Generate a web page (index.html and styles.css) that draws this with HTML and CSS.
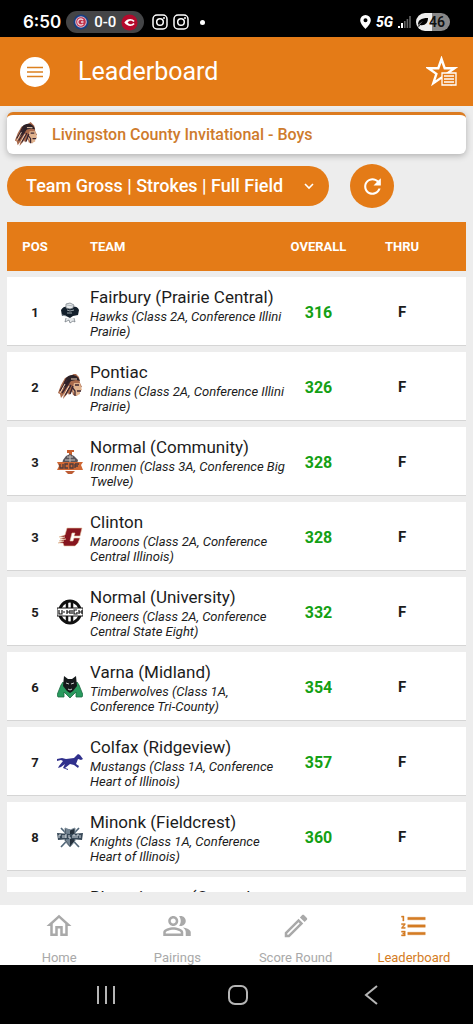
FILE: index.html
```html
<!DOCTYPE html>
<html lang="en">
<head>
<meta charset="utf-8">
<meta name="viewport" content="width=device-width, initial-scale=1">
<title>Leaderboard</title>
<link rel="stylesheet" href="styles.css">
</head>
<body>
<svg class="defs" width="0" height="0" aria-hidden="true">
  <symbol id="chief" viewBox="0 0 26 26">
    <path d="M15 1 8 4 4 11 1 19l2 1 1 4 3-4-1 5 5-6 1 2 3-4 1 4 4 1 1-4 3-1-1-3 2-1-2-4-1-6-4-4z" fill="#a96a4c"/>
    <path d="M9 4c4-5 12-4 14 3l-4-1-5 1-4 5-5 3 2-7z" fill="#2b2026"/>
    <path d="M17 9l6 0 1 4 1 3-2 1v3l-4 2-4-6z" fill="#e0b28e"/>
    <path d="M12 9l-7 10M14 11l-6 10M10 6 3 17M16 12l-3 8" stroke="#3b2630" stroke-width="1.5" fill="none"/>
    <path d="M12 12l-5 9M8 10l-5 9M14 5l6 0" stroke="#f5d7bb" stroke-width="1" fill="none"/>
    <path d="M18 11h4M20 17h4M15 13l3 4 0 5" stroke="#3b2630" stroke-width="1.3" fill="none"/>
  </symbol>
  <symbol id="instagram" viewBox="0 0 16 16">
    <g fill="none" stroke="#fff" stroke-width="1.5"><rect x="1" y="1" width="14" height="14" rx="4"/><circle cx="8" cy="8" r="3.3"/></g>
    <circle cx="12" cy="4" r="1" fill="#fff"/>
  </symbol>
</svg>

<div class="status">
  <span class="clock">6:50</span>
  <span class="score">
    <svg width="16" height="16" viewBox="0 0 16 16"><circle cx="8" cy="8" r="7.5" fill="#173e83"/><circle cx="8" cy="8" r="5.8" fill="#d8bfd0"/><circle cx="8" cy="8" r="4.8" fill="#c0304a"/><path d="M10.2 6.2A3 3 0 1 0 10.2 9.8M8 8h2.5" fill="none" stroke="#f0d8e0" stroke-width="1.3"/></svg>
    <span>0-0</span>
    <svg width="17" height="17" viewBox="0 0 18 18"><circle cx="9" cy="9" r="8.5" fill="#b50a2c"/><path d="M14.5 7.5C12 4.500 6.500 4.500 3.500 9c3 4.500 8.500 4.500 11 1.500l-1.500-1C11.500 11.500 8.500 11.300 7 9c1.500-2.300 4.500-2.500 6-.5z" fill="#fff"/></svg>
  </span>
  <svg width="16" height="16"><use href="#instagram"/></svg>
  <svg width="16" height="16"><use href="#instagram"/></svg>
  <span class="dot"></span>
  <span class="system">
    <svg width="11" height="14" viewBox="0 0 11 14"><path fill="#fff" fill-rule="evenodd" d="M5.500 0A5.300 5.300 0 0 0 .2 5.300C.2 9 5.500 14 5.500 14s5.300-5 5.300-8.700A5.300 5.300 0 0 0 5.500 0zm0 3.300a2 2 0 1 1 0 4 2 2 0 0 1 0-4z"/></svg>
    <span class="network">5G</span>
    <svg width="13" height="12" viewBox="0 0 13 12"><path d="M0 10h2v2H0zM3 7h2v5H3z" fill="#fff"/><path d="M6 5h1.600v7H6zM8.600 3h1.600v9H8.600zM11.200 0h1.600v12h-1.600z" fill="#666"/></svg>
    <span class="battery"><svg width="10" height="10" viewBox="0 0 10 10"><path d="M0 8C0 3 3 1 10 1c0 5-3 8-8 7L1 10 0 9l5-5z" fill="#000"/></svg>46</span>
  </span>
</div>

<header class="appbar">
  <button class="menu" aria-label="Menu"><svg width="16" height="12" viewBox="0 0 16 12"><path d="M0 1.500h16M0 6h16M0 10.500h16" stroke="#dc8120" stroke-width="1.500"/></svg></button>
  <h1>Leaderboard</h1>
  <button class="favorite" aria-label="Favorites"><svg width="32" height="32" viewBox="0 0 32 32">
    <path d="M15.500 3l3.200 9.200h9.800l-7.900 5.700 3 9.300-8.100-5.600-8.200 5.600 3.100-9.300-7.900-5.700h9.800z" fill="none" stroke="#fff" stroke-width="2.400"/>
    <path d="M16 17h14v12H16z" fill="#e47b17" stroke="#fff" stroke-width="1.300"/><path d="M18 20h10M18 23h10M18 26h10" stroke="#fff" stroke-width="1.300"/>
  </svg></button>
</header>

<main class="content">
  <section class="event">
    <svg width="24" height="26"><use href="#chief"/></svg>
    <h2>Livingston County Invitational - Boys</h2>
  </section>
  <div class="filters">
    <div class="picker">
      <select aria-label="Leaderboard view"><option>Team Gross | Strokes | Full Field</option></select>
      <svg class="chevron" width="10" height="7" viewBox="0 0 10 7"><path d="M1 1l4 4 4-4" fill="none" stroke="#fff" stroke-width="1.600"/></svg>
    </div>
    <button class="refresh" aria-label="Refresh"><svg width="25" height="25" viewBox="0 0 24 24"><path fill="#fff" d="M17.650 6.350C16.200 4.900 14.210 4 12 4c-4.420 0-7.990 3.580-7.990 8s3.570 8 7.990 8c3.730 0 6.840-2.550 7.730-6h-2.080c-.82 2.330-3.040 4-5.650 4-3.310 0-6-2.690-6-6s2.690-6 6-6c1.660 0 3.140.69 4.220 1.780L13 11h7V4z"/></svg></button>
  </div>
  <div class="board">
    <table>
      <colgroup><col class="c-pos"><col class="c-logo"><col><col class="c-overall"><col class="c-thru"></colgroup>
      <thead><tr><th class="pos">POS</th><th class="team-head" colspan="2">TEAM</th><th>OVERALL</th><th class="thru">THRU</th></tr></thead>
      <tbody>
        <tr><td class="pos">1</td><td class="logo"><svg width="26" height="26" viewBox="0 0 26 26"><path d="M4 11c2-4 6-4 9-3 3-1 8-1 9 3l-1 5-5 1-3 2-4-2-4 0z" fill="#131f2b"/><path d="M9 5l4-1 4 2-1 3-3 1-4-1zM9 19l-1 4 4-2 1 3 3-2 2 1-1-4" fill="#e5e8ea" stroke="#6b747b" stroke-width=".7"/><path d="M10 6l6 1M5 16l4 1M10 11l3 1 4-1M10 14l5 0" stroke="#a9b2b8" stroke-width=".9" fill="none"/></svg></td><td class="team"><strong>Fairbury (Prairie Central)</strong><em>Hawks (Class 2A, Conference Illini Prairie)</em></td><td class="overall">316</td><td class="thru">F</td></tr>
        <tr><td class="pos">2</td><td class="logo"><svg width="26" height="26"><use href="#chief"/></svg></td><td class="team"><strong>Pontiac</strong><em>Indians (Class 2A, Conference Illini Prairie)</em></td><td class="overall">326</td><td class="thru">F</td></tr>
        <tr><td class="pos">3</td><td class="logo"><svg width="26" height="26" viewBox="0 0 26 26"><path d="M10 1h7v2h-2v4h-3V4h-2z" fill="#c9602e"/><path d="M9 7l4-2 4 2 4 4-1 4H5l1-4z" fill="#59555b"/><path d="M10 8l6 0M8 11l10 0M13 6v8" stroke="#c8c1bd"/><path d="M0 13h26l-2 3 2 5H0l2-4z" fill="#cf6834"/><path d="M3 15v4h3v-4M11 15H8v4h3M13 15v4h3v-4zM18 15v4M18 15h4M18 17h3" stroke="#4d3b3c" stroke-width="1.300" fill="none"/><path d="M8 22h10l-3 3h-4z" fill="#bd5d35"/></svg></td><td class="team"><strong>Normal (Community)</strong><em>Ironmen (Class 3A, Conference Big Twelve)</em></td><td class="overall">328</td><td class="thru">F</td></tr>
        <tr><td class="pos">3</td><td class="logo"><svg width="26" height="26" viewBox="0 0 26 26"><path d="M10 4h15l-2 8h-6l1-3h-3l-2 8h3l1-3h6l-2 5-3 3H7l-1-3H1l6-2H2l7-2H3l5-2H2l6-2z" fill="#86151f" stroke="#e7c4a0" stroke-width=".6"/></svg></td><td class="team"><strong>Clinton</strong><em>Maroons (Class 2A, Conference Central Illinois)</em></td><td class="overall">328</td><td class="thru">F</td></tr>
        <tr><td class="pos">5</td><td class="logo"><svg width="26" height="26" viewBox="0 0 26 26"><g fill="none" stroke="#111"><ellipse cx="13" cy="13" rx="10.500" ry="11" stroke-width="3"/><path d="M10 1v24M15 1v24" stroke-width="2.500"/></g><path d="M0 9h26v8H0z" fill="#fff" stroke="#111"/><path d="M2 11v4h3v-4M6 13h2M10 11v4M10 13h3M13 11v4M15 11v4M20 11h-3v4h3v-2M22 11v4M22 13h3M25 11v4" fill="none" stroke="#111" stroke-width="1.200"/></svg></td><td class="team"><strong>Normal (University)</strong><em>Pioneers (Class 2A, Conference Central State Eight)</em></td><td class="overall">332</td><td class="thru">F</td></tr>
        <tr><td class="pos">6</td><td class="logo"><svg width="26" height="26" viewBox="0 0 26 26"><path d="M6 8l7 9 7-9 2 3 4 10-1 2h-6v-5l-6 6-6-6v5H1l-1-2 4-10z" fill="#299a5e" stroke="#1d6a43" stroke-width=".8"/><path d="M7 2l4 3h4l4-3 1 10-4 5-3 2-3-2-4-5z" fill="#15191b"/><path d="M9 9l3 1M17 9l-3 1M11 15l2 1 2-1" stroke="#c8cdcb" fill="none"/></svg></td><td class="team"><strong>Varna (Midland)</strong><em>Timberwolves (Class 1A, Conference Tri-County)</em></td><td class="overall">354</td><td class="thru">F</td></tr>
        <tr><td class="pos">7</td><td class="logo"><svg width="26" height="26" viewBox="0 0 26 26"><path d="M0 10l5-1 4 1 8-1 4-4 2 1 3 4-2 1-3-1-2 5 3 2-1 2-4-3-4-1-5 4 3 1v1l-5-2 2-4-4 3-3 1 1-2 4-5-2-1-4 1z" fill="#30308c"/></svg></td><td class="team"><strong>Colfax (Ridgeview)</strong><em>Mustangs (Class 1A, Conference Heart of Illinois)</em></td><td class="overall">357</td><td class="thru">F</td></tr>
        <tr><td class="pos">8</td><td class="logo"><svg width="26" height="26" viewBox="0 0 26 26"><path d="M4 4l18 19M22 4L4 23" stroke="#526779" stroke-width="1.700"/><path d="M8 4l5 2 5-2v13l-5 6-5-6z" fill="#26313c" stroke="#81919d"/><path d="M13 5v17l-4-5V5z" fill="#738391"/><path d="M0 9l13 1 13-1-1 7-12-1-12 1z" fill="#384958"/><path d="M2 14v-3h2M6 11v3M8 14v-3h2M8 13h2M12 11v3h2M16 14v-3h2v3M20 14v-3h2M23 11v3" stroke="#d6dde2" fill="none"/></svg></td><td class="team"><strong>Minonk (Fieldcrest)</strong><em>Knights (Class 1A, Conference Heart of Illinois)</em></td><td class="overall">360</td><td class="thru">F</td></tr>
        <tr><td></td><td></td><td class="team"><strong>Bloomington (Central Catholic)</strong></td><td></td><td></td></tr>
      </tbody>
    </table>
  </div>
</main>

<nav class="tabs">
  <a href="#home"><svg width="30" height="30" viewBox="0 0 24 24"><path d="M12 5.690l5 4.500V18h-2v-6H9v6H7v-7.810l5-4.500M12 3L2 12h3v8h6v-6h2v6h6v-8h3z"/></svg>Home</a>
  <a href="#pairings"><svg width="30" height="30" viewBox="0 0 24 24"><path d="M16.670 13.130C18.040 14.060 19 15.320 19 17v3h4v-3c0-2.180-3.570-3.470-6.330-3.870zM15 12c2.210 0 4-1.790 4-4s-1.790-4-4-4c-.47 0-.91.1-1.330.24C14.500 5.270 15 6.580 15 8s-.5 2.730-1.330 3.760c.42.14.86.24 1.330.24zM9 12c2.210 0 4-1.790 4-4s-1.790-4-4-4-4 1.790-4 4 1.790 4 4 4zm0-6c1.100 0 2 .9 2 2s-.9 2-2 2-2-.9-2-2 .9-2 2-2zm0 7c-2.670 0-8 1.340-8 4v3h16v-3c0-2.660-5.330-4-8-4zm6 5H3v-.99C3.200 16.290 6.300 15 9 15s5.800 1.290 6 2v1z"/></svg>Pairings</a>
  <a href="#score"><svg width="30" height="30" viewBox="0 0 24 24"><path d="M14.060 9.020l.92.92L5.920 19H5v-.92l9.060-9.060M17.660 3c-.25 0-.51.1-.7.29l-1.830 1.830 3.750 3.750 1.830-1.830c.39-.39.39-1.020 0-1.410l-2.340-2.340c-.2-.2-.45-.29-.71-.29zm-3.600 3.190L3 17.250V21h3.750L17.810 9.940l-3.750-3.750z"/></svg>Score Round</a>
  <a class="active" href="#leaderboard" aria-current="page"><svg width="30" height="30" viewBox="0 0 24 24"><path d="M2 17h2v.5H3v1h1v.5H2v1h3v-4H2v1zm1-9h1V4H2v1h1v3zm-1 3h1.800L2 13.100v.9h3v-1H3.200L5 10.900V10H2v1zm5-6v2h14V5H7zm0 14h14v-2H7v2zm0-6h14v-2H7v2z" stroke="currentColor" stroke-width=".3"/></svg>Leaderboard</a>
</nav>

<div class="keys">
  <button aria-label="Recent apps"><svg width="20" height="20" viewBox="0 0 20 20"><path d="M2 1v18M10 1v18M18 1v18"/></svg></button>
  <button aria-label="Home screen"><svg width="20" height="20" viewBox="0 0 20 20"><rect x="1" y="1" width="18" height="18" rx="6"/></svg></button>
  <button aria-label="Back"><svg width="20" height="20" viewBox="0 0 20 20"><path d="M16 1L5 10l11 9"/></svg></button>
</div>
</body>
</html>
```

FILE: styles.css
```css
* { box-sizing: border-box; }

body {
  margin: 0;
  height: 100vh;
  display: flex;
  flex-direction: column;
  background: #ededed;
  color: #1c1c1c;
  font-family: Roboto, "Liberation Sans", sans-serif;
}

svg { display: block; flex: none; }
.defs { position: absolute; }
button { border: 0; padding: 0; background: none; display: grid; place-items: center; }
h1, h2 { margin: 0; }

.status {
  flex: none;
  height: 37px;
  padding: 7px 23px 0;
  display: flex;
  align-items: center;
  gap: 5px;
  background: #000;
  color: #fff;
}
.clock { font: 600 17px/20px Inter, sans-serif; }
.score {
  height: 22px;
  padding: 0 6px 0 7px;
  margin-right: 3px;
  display: flex;
  align-items: center;
  gap: 5px;
  border-radius: 11px;
  background: #444547;
  font: 500 15px/20px Roboto, sans-serif;
}
.dot { width: 5px; height: 5px; margin-left: 6px; border-radius: 50%; background: #fff; }
.system { margin-left: auto; display: flex; align-items: center; gap: 5px; }
.network { font: italic 800 14px/18px Roboto, sans-serif; }
.battery {
  height: 18px;
  padding: 0 5px 0 2px;
  display: flex;
  align-items: center;
  gap: 1px;
  border-radius: 9px;
  background: linear-gradient(90deg, #eee 46%, #888 46%);
  color: #111;
  font: 600 14px/18px Roboto, sans-serif;
}

.appbar {
  flex: none;
  height: 69px;
  padding: 0 15px 0 20px;
  display: flex;
  align-items: center;
  background: #e47b17;
  color: #fff;
}
.menu { width: 30px; height: 30px; border-radius: 50%; background: #fff; }
.appbar h1 { margin-left: 28px; flex: 1; font-size: 25px; line-height: 32px; font-weight: 400; }

.content {
  flex: 1;
  min-height: 0;
  padding: 6px 7px 13px;
  display: flex;
  flex-direction: column;
}
.event {
  flex: none;
  height: 42px;
  padding: 0 7px;
  display: flex;
  align-items: center;
  gap: 14px;
  border-top: 3px solid #dc7b20;
  border-radius: 6px;
  background: #fff;
  box-shadow: 0 2px 6px rgb(0 0 0 / 25%);
}
.event h2 { color: #ce7b2c; font-size: 16px; line-height: 20px; font-weight: 500; }

.filters { flex: none; height: 44px; margin-top: 10px; display: flex; align-items: center; gap: 21px; }
.picker { position: relative; flex: 0 1 322px; }
.picker select {
  appearance: none;
  width: 100%;
  height: 40px;
  padding: 0 36px 0 19px;
  border: 0;
  border-radius: 20px;
  background: #e47b17;
  color: #fff;
  font: 500 18px/24px Roboto, sans-serif;
}
.chevron { position: absolute; right: 15px; top: 17px; pointer-events: none; }
.refresh { width: 44px; height: 44px; border-radius: 50%; background: #e47b17; }

.board { flex: 1; min-height: 0; margin-top: 8px; overflow: hidden; }
table { width: 100%; table-layout: fixed; border-collapse: separate; border-spacing: 0 6px; }
.c-pos { width: 50px; }
.c-logo { width: 33px; }
.c-overall { width: 63px; }
.c-thru { width: 116px; }
th { height: 49px; padding: 0; background: #e47b17; color: #fff; font-size: 13px; line-height: 16px; font-weight: 700; }
.team-head { padding-left: 33px; text-align: left; }
td { height: 69px; padding: 2px 0 0; background: #fff; border-bottom: 1px solid #d5d5d5; text-align: center; }
.pos { padding-left: 6px; font-weight: 700; }
td.pos { font-size: 13px; }
.team { padding: 10px 0 5px; text-align: left; vertical-align: top; }
.team strong, .team em { display: block; }
.team strong { font-size: 17px; line-height: 20px; font-weight: 400; }
.team em { margin-top: 2px; font-size: 13px; line-height: 15px; }
.overall { color: #14a014; font-size: 16px; font-weight: 700; }
.thru { padding-right: 12px; }
td.thru { font-size: 15px; font-weight: 700; }

.tabs { flex: none; height: 60px; display: grid; grid-template-columns: repeat(4, 1fr); background: #fff; }
.tabs a {
  padding-top: 6px;
  display: flex;
  flex-direction: column;
  align-items: center;
  gap: 8px;
  color: #a9a9a9;
  font-size: 13px;
  line-height: 17px;
  text-decoration: none;
}
.tabs a.active { color: #d47c24; }
.tabs svg { fill: currentColor; }

.keys {
  flex: none;
  height: 59px;
  padding: 0 36px 0 40px;
  display: grid;
  grid-template-columns: repeat(3, 1fr);
  align-items: center;
  background: #000;
}
.keys svg { fill: none; stroke: #b5b5b5; stroke-width: 2; }
```
